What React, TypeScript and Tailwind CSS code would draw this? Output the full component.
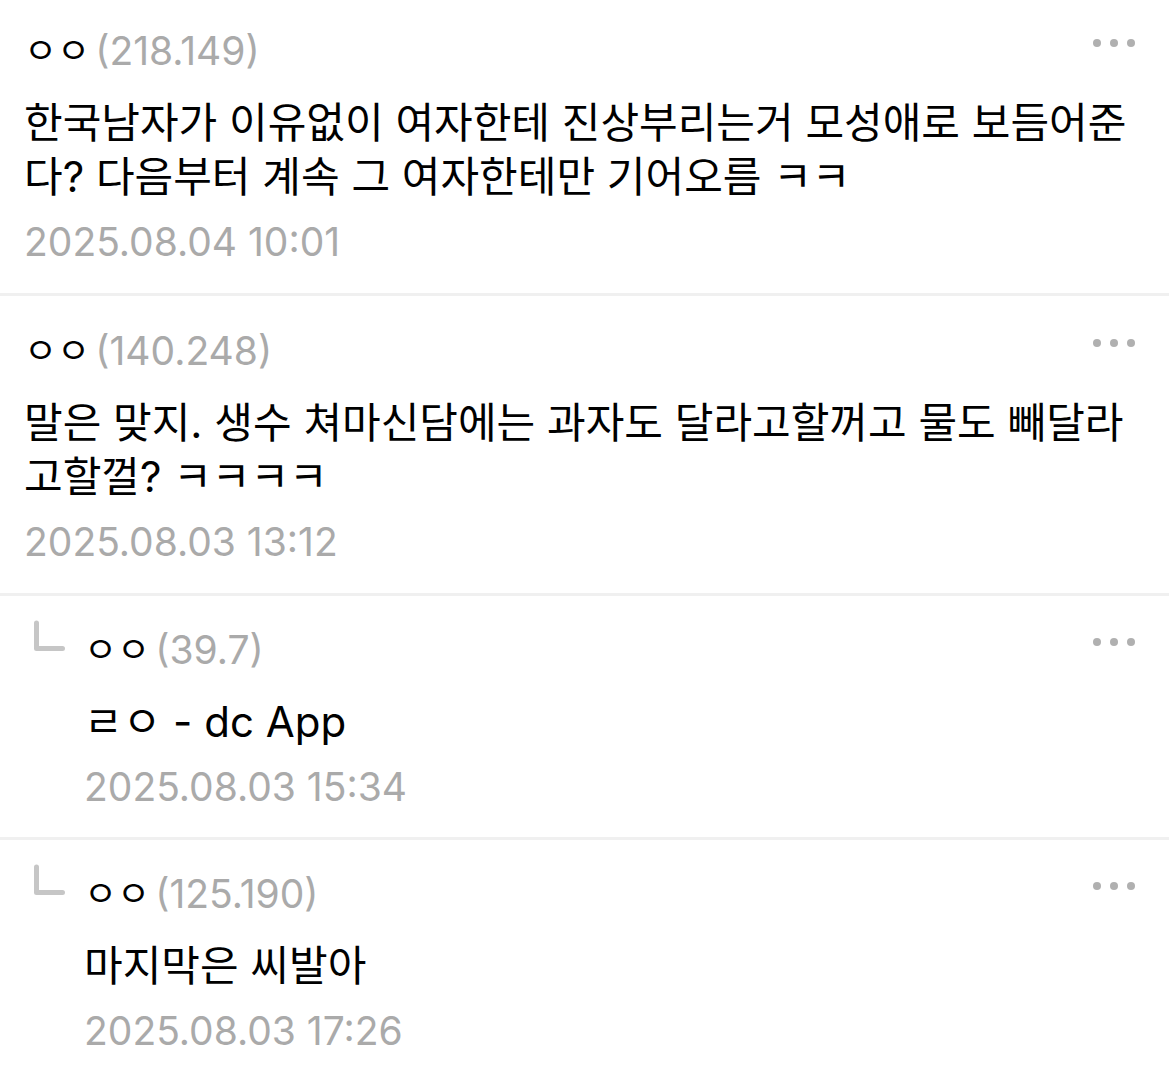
type Comment = { name: string; ip: string; text: string; time: string; reply?: boolean };

const comments: Comment[] = [
  { name: "ㅇㅇ", ip: "(218.149)", text: "한국남자가 이유없이 여자한테 진상부리는거 모성애로 보듬어준다? 다음부터 계속 그 여자한테만 기어오름 ㅋㅋ", time: "2025.08.04 10:01" },
  { name: "ㅇㅇ", ip: "(140.248)", text: "말은 맞지. 생수 쳐마신담에는 과자도 달라고할꺼고 물도 빼달라고할껄? ㅋㅋㅋㅋ", time: "2025.08.03 13:12" },
  { name: "ㅇㅇ", ip: "(39.7)", text: "ㄹㅇ - dc App", time: "2025.08.03 15:34", reply: true },
  { name: "ㅇㅇ", ip: "(125.190)", text: "마지막은 씨발아", time: "2025.08.03 17:26", reply: true },
];

function Item({ c }: { c: Comment }) {
  return (
    <li
      className={`flex border-b-3 border-[#f0f0f0] pr-6 last:border-b-0 ${
        c.reply ? "pt-6 pb-[23px] pl-8" : "pt-7 pb-6 pl-6 first:pt-6"
      }`}
    >
      {c.reply && (
        <svg
          className="mr-4 h-8 w-9 shrink-0"
          viewBox="0 0 36 32"
          fill="none"
          stroke="#c6c6c6"
          strokeWidth="5"
          strokeLinecap="round"
          strokeLinejoin="round"
          aria-hidden="true"
        >
          <path d="M4.5 3V28.5H30.5" />
        </svg>
      )}
      <article className={`min-w-0 flex-1 ${c.reply ? "pt-[3px]" : ""}`}>
        <header className="flex items-start leading-[54px]">
          <span className="text-[36px] text-black">{c.name}</span>
          <span className="ml-[5px] text-[39px] text-[#aaaaaa]">{c.ip}</span>
          <button type="button" aria-label="더보기" className="mt-[11px] mr-[9px] ml-auto">
            <svg className="block h-4 w-11" viewBox="0 0 44 16" fill="#b0b0b0" aria-hidden="true">
              <circle cx="5" cy="8" r="4" />
              <circle cx="22" cy="8" r="4" />
              <circle cx="39" cy="8" r="4" />
            </svg>
          </button>
        </header>
        <p className="mt-[18px] text-[42px] leading-[54px] break-all text-black">{c.text}</p>
        <time className="mt-[11px] block text-[39px] leading-[54px] text-[#aaaaaa]">{c.time}</time>
      </article>
    </li>
  );
}

export default function App() {
  return (
    <main className="min-h-screen bg-white font-[Inter,'Noto_Sans_CJK_KR',sans-serif]">
      <ul>
        {comments.map((c) => (
          <Item key={c.time} c={c} />
        ))}
      </ul>
    </main>
  );
}
